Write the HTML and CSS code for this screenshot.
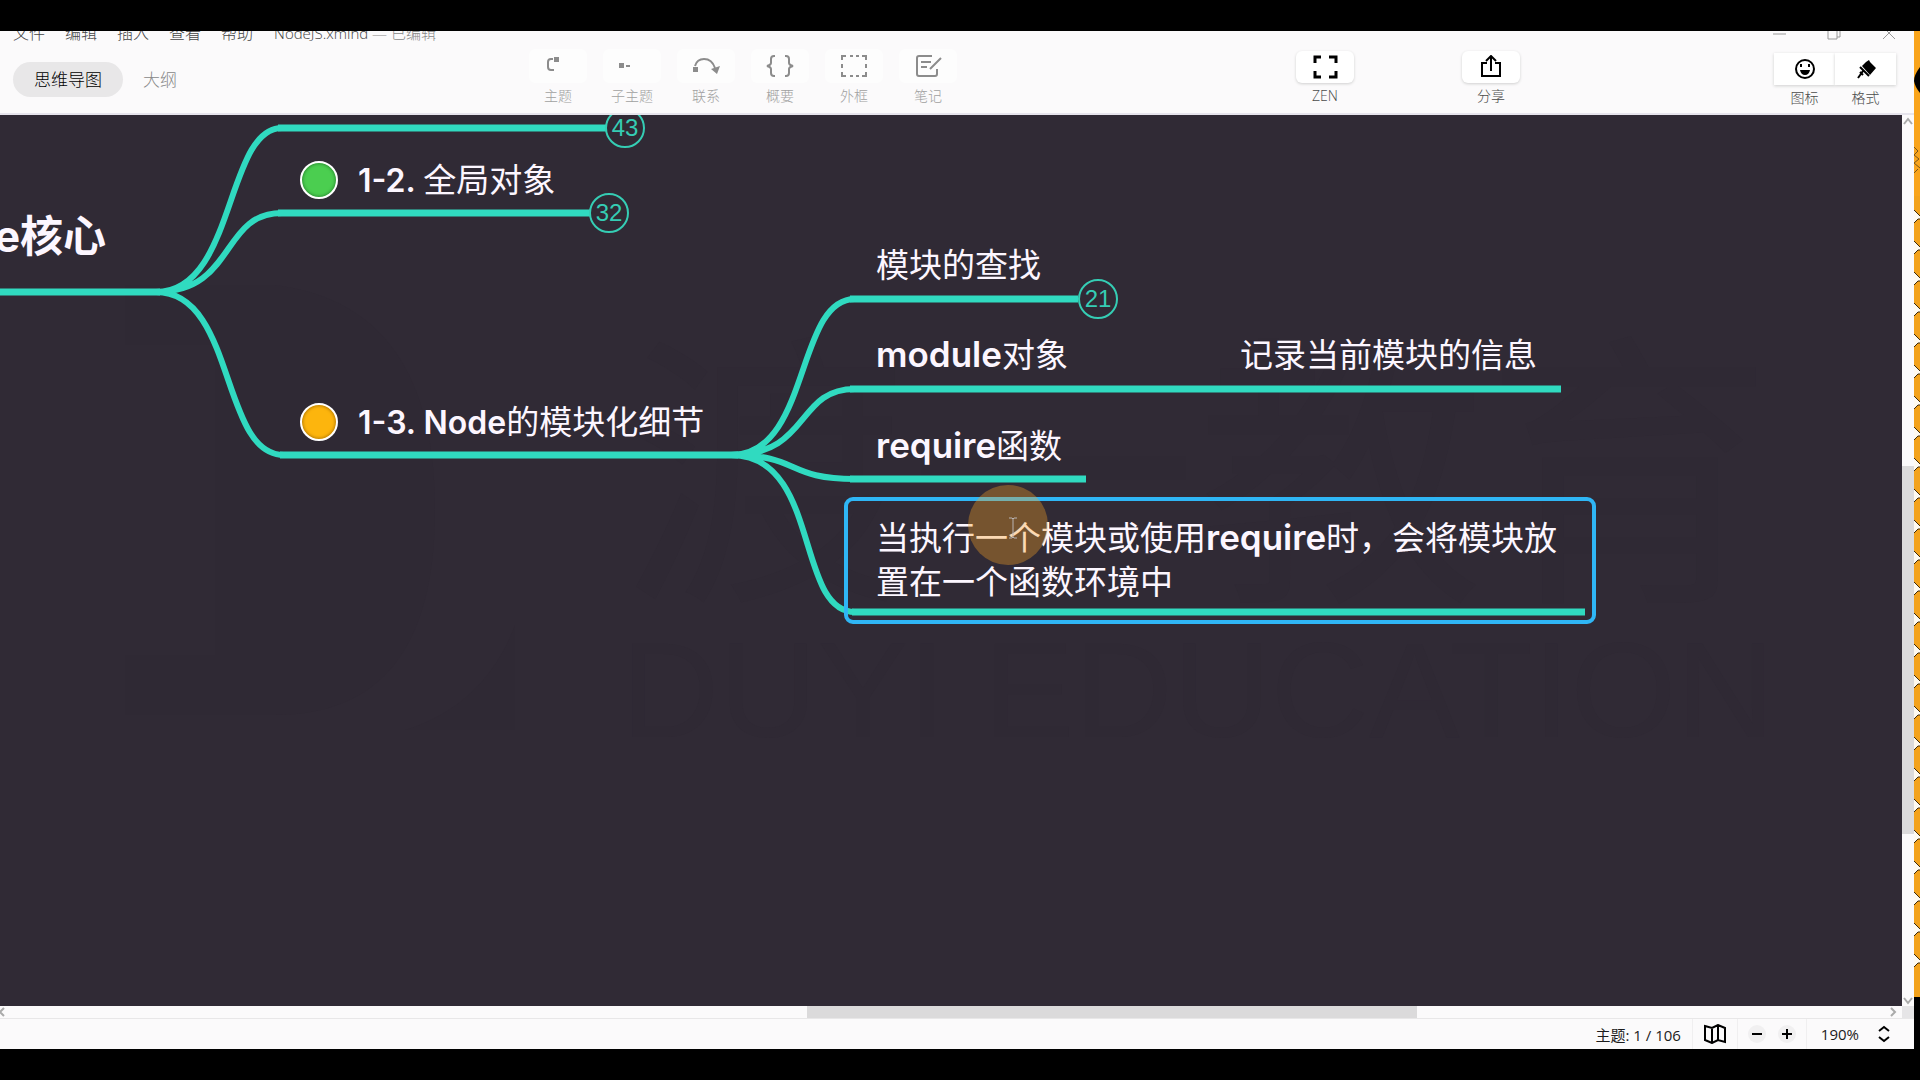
FILE: index.html
```html
<!DOCTYPE html>
<html lang="zh-CN">
<head>
<meta charset="utf-8">
<title>NodeJS.xmind</title>
<link rel="stylesheet" href="styles.css">
</head>
<body>
<div class="desktop">
  <div class="window">
    <header class="header">
      <div class="title-row">
        <nav class="menu">
          <button>文件</button><button>编辑</button><button>插入</button><button>查看</button><button>帮助</button>
        </nav>
        <p class="doc-title">NodeJS.xmind <span class="muted">— 已编辑</span></p>
        <div class="window-controls">
          <button aria-label="最小化"><svg width="14" height="14" viewBox="0 0 14 14"><path d="M1 8H14"/></svg></button>
          <button aria-label="还原"><svg width="14" height="14" viewBox="0 0 14 14"><path d="M1 3H10V13H1ZM4 3V0H13V11H10"/></svg></button>
          <button aria-label="关闭"><svg width="14" height="14" viewBox="0 0 14 14"><path d="M1 1L13 13M13 1L1 13"/></svg></button>
        </div>
      </div>
      <div class="tool-row">
        <div class="tabs">
          <button class="tab active">思维导图</button>
          <button class="tab">大纲</button>
        </div>
        <div class="tools disabled">
          <button class="tool"><span class="face"><svg width="28" height="24" viewBox="0 0 28 24"><path d="M9 5H7Q4 5 4 8V13Q4 16 7 16H10" fill="none" stroke="currentColor" stroke-width="2"/><path d="M10 3H15V8H10Z" fill="currentColor"/></svg></span>主题</button>
          <button class="tool"><span class="face"><svg width="28" height="24" viewBox="0 0 28 24"><path d="M1 9H6V14H1ZM8 11H12V13H8Z" fill="currentColor"/></svg></span>子主题</button>
          <button class="tool"><span class="face"><svg width="28" height="24" viewBox="0 0 28 24"><path d="M3 12Q5 5 12 5Q20 5 23 14" fill="none" stroke="currentColor" stroke-width="2"/><path d="M1 13H6V18H1ZM19 15L28 12L25 20Z" fill="currentColor"/></svg></span>联系</button>
          <button class="tool"><span class="face"><svg width="28" height="24" viewBox="0 0 28 24"><path d="M9 2H8Q5 2 5 5V9Q5 11 1 12Q5 13 5 15V19Q5 22 8 22H9M19 2H20Q23 2 23 5V9Q23 11 27 12Q23 13 23 15V19Q23 22 20 22H19" fill="none" stroke="currentColor" stroke-width="2"/></svg></span>概要</button>
          <button class="tool"><span class="face"><svg width="28" height="24" viewBox="0 0 28 24"><path d="M2 6V2H6M10 2H13M16 2H19M22 2H26V6M26 10V14M26 18V22H22M19 22H16M13 22H10M6 22H2V18M2 14V10" fill="none" stroke="currentColor" stroke-width="2"/></svg></span>外框</button>
          <button class="tool"><span class="face"><svg width="28" height="24" viewBox="0 0 28 24"><path d="M18 2H5Q3 2 3 4V20Q3 22 5 22H21Q23 22 23 20V15M7 8H17M7 13H13M16 15L27 4" fill="none" stroke="currentColor" stroke-width="2"/></svg></span>笔记</button>
        </div>
        <div class="tools wide">
          <button class="tool"><span class="face raised"><svg width="28" height="24" viewBox="0 0 28 24"><path d="M4 8V2H10M18 2H25V8M25 16V22H18M10 22H4V16" fill="none" stroke="currentColor" stroke-width="3"/></svg></span>ZEN</button>
          <button class="tool"><span class="face raised"><svg width="28" height="24" viewBox="0 0 28 24"><path d="M10 8H5V21H23V8H18M14 16V2M9 6L14 1L19 6" fill="none" stroke="currentColor" stroke-width="2"/></svg></span>分享</button>
        </div>
        <div class="tools joined">
          <button class="tool"><span class="face raised"><svg width="24" height="24" viewBox="0 0 24 24"><circle cx="12" cy="12" r="9" fill="none" stroke="currentColor" stroke-width="2"/><path d="M8 7V10M16 7V10" stroke="currentColor" stroke-width="2"/><path d="M7 13H17Q16 18 12 18Q8 18 7 13Z" fill="currentColor"/></svg></span>图标</button>
          <button class="tool"><span class="face raised"><svg width="24" height="24" viewBox="0 0 24 24"><path d="M12 5L15 3L16 5L22 11L16 18L8 9Z" fill="currentColor"/><path d="M6 10L15 19M9 14L4 21M6 15L9 18" stroke="currentColor" stroke-width="2" fill="none"/></svg></span>格式</button>
        </div>
      </div>
    </header>

    <div class="workspace">
      <main class="canvas">
        <div class="watermark" aria-hidden="true">
          <svg width="400" height="450" viewBox="0 0 400 450"><path d="M0 0H150Q310 20 310 225Q310 430 150 430H0V370H90V60H0ZM390 340V445H280Q360 420 390 340Z"/></svg>
          <div class="watermark-text"><span class="watermark-name">渡一教育</span><span class="watermark-latin">DUYI EDUCATION</span></div>
        </div>
        <svg class="branches" width="1700" height="600" viewBox="0 0 1700 600">
          <g class="trunk">
            <path d="M0 177H160M278 13H606M278 98H590M280 340H738M850 184H1078M850 274H1561M850 364H1086M852 497H1585"/>
          </g>
          <g class="curve">
            <path d="M156 177C236 177 225 13 282 13M156 177C236 177 220 98 282 98M156 177C236 177 220 340 284 340"/>
            <path d="M731 340C811 340 795 184 855 184M731 340C811 340 795 274 855 274M731 340C801 340 785 364 855 364M731 340C821 340 795 497 855 497"/>
          </g>
        </svg>

        <div class="topic central">Node核心</div>
        <button class="count count-a">43</button>
        <div class="topic t-global"><i class="marker green"></i><span><b>1-2. </b>全局对象</span></div>
        <button class="count count-b">32</button>
        <div class="topic t-module"><i class="marker orange"></i><span><b>1-3. Node</b>的模块化细节</span></div>
        <div class="topic t-lookup">模块的查找</div>
        <button class="count count-c">21</button>
        <div class="topic t-object"><b>module</b>对象</div>
        <div class="topic t-info">记录当前模块的信息</div>
        <div class="topic t-require"><b>require</b>函数</div>
        <div class="topic selected">当执行一个模块或使用<b>require</b>时，会将模块放<br>置在一个函数环境中</div>
        <div class="pointer"><svg width="10" height="22" viewBox="0 0 10 22"><path d="M1 1H4L5 2L6 1H9M5 2V20M1 21H4L5 20L6 21H9" fill="none" stroke="#b9b4b4" stroke-width="1"/></svg></div>
      </main>
      <div class="scroll-y">
        <svg width="12" height="12" viewBox="0 0 12 12"><path d="M2 9L6 4L10 9"/></svg>
        <div class="track"><div class="thumb"></div></div>
        <svg width="12" height="12" viewBox="0 0 12 12"><path d="M2 4L6 9L10 4"/></svg>
      </div>
    </div>
    <div class="scroll-x">
      <svg width="12" height="12" viewBox="0 0 12 12"><path d="M4 2L0 6L4 10"/></svg>
      <div class="track"><div class="thumb"></div></div>
      <svg width="12" height="12" viewBox="0 0 12 12"><path d="M3 2L7 6L3 10"/></svg>
      <span class="corner"></span>
    </div>

    <footer class="status">
      <span class="topic-count">主题: 1 / 106</span>
      <button class="map-button" aria-label="导航图"><svg width="22" height="20" viewBox="0 0 22 20"><path d="M1 2L8 4L14 1L21 4V18L14 16L8 19L1 16ZM8 4V18M14 1V16" fill="none" stroke="#000" stroke-width="2"/></svg></button>
      <div class="zoom">
        <button aria-label="缩小"><svg width="18" height="18" viewBox="0 0 18 18"><path d="M4 9H14"/></svg></button>
        <button aria-label="放大"><svg width="18" height="18" viewBox="0 0 18 18"><path d="M4 9H14M9 4V14"/></svg></button>
      </div>
      <button class="zoom-level">190%<svg width="12" height="18" viewBox="0 0 12 18"><path d="M1 6L6 2L11 6M1 12L6 16L11 12"/></svg></button>
    </footer>
  </div>
  <aside class="wallpaper" aria-hidden="true">
    <svg width="6" height="966">
      <defs><pattern id="scales" width="6" height="31" patternUnits="userSpaceOnUse">
        <rect width="6" height="31" fill="#fffaf0"/><path d="M0 6L4 2H6V30L0 24Z" fill="#f3a21c"/><path d="M0 6L4 2H6M0 24L6 30" fill="none" stroke="#3d2a0c" stroke-width="1"/>
      </pattern></defs>
      <rect width="6" height="966" fill="url(#scales)"/>
      <rect width="6" height="165" fill="#f9a41b"/>
      <path d="M6 36Q0 44 0 50Q1 56 6 62Z" fill="#000"/>
      <path d="M0 116L4 120L0 124L5 128L0 132L6 137M0 142L4 138" fill="none" stroke="#7a5417"/>
      <rect y="938" width="6" height="28" fill="#f3a21c"/>
    </svg>
  </aside>
</div>
</body>
</html>
```
FILE: styles.css
```css
* { box-sizing: border-box; }

body {
  margin: 0;
  background: #000;
  color: #1c1c1c;
  font-family: "Open Sans", "Noto Sans CJK SC", sans-serif;
}

button {
  margin: 0;
  padding: 0;
  border: 0;
  background: none;
  color: inherit;
  font: inherit;
}

svg { display: block; flex: none; }

.desktop {
  display: flex;
  height: 100vh;
  padding: 31px 0;
}

.window {
  display: flex;
  flex: 1;
  flex-direction: column;
  min-width: 0;
  background: #fbfafb;
}

/* Header */
.header {
  height: 84px;
  border-bottom: 2px solid #e6e4ec;
  overflow: hidden;
  flex: none;
}

.title-row {
  display: flex;
  align-items: center;
  height: 24px;
  margin-top: -10px;
  padding: 0 18px 0 13px;
}

.menu {
  display: flex;
  gap: 20px;
  color: #444;
  font-size: 16px;
  font-weight: 300;
  line-height: 24px;
}

.doc-title {
  flex: 1;
  margin: 0 0 0 21px;
  color: #444;
  font-size: 15px;
  font-weight: 300;
  line-height: 24px;
}

.muted { color: #888; }

.window-controls {
  display: flex;
  gap: 41px;
}

.window-controls path {
  fill: none;
  stroke: #999;
}

.tool-row {
  display: flex;
  align-items: flex-start;
  padding: 2px 18px 0 13px;
}

.tabs {
  display: flex;
  flex: 1;
  margin-top: 15px;
}

.tab {
  height: 35px;
  padding: 0 20px;
  border-radius: 18px;
  color: #888;
  font-size: 17px;
  font-weight: 300;
  line-height: 36px;
}

.tab.active {
  padding: 0 21px;
  background: #e8e7e8;
  color: #000;
}

.tools {
  display: flex;
  gap: 16px;
  color: #4a4a4a;
}

.tools.disabled {
  margin-right: 339px;
  color: #a0a0a0;
}

.tools.wide {
  gap: 108px;
  margin: 2px 254px 0 0;
}

.tools.joined {
  gap: 0;
  margin-top: 4px;
}

.tool {
  display: flex;
  flex-direction: column;
  align-items: center;
  width: 58px;
  font-size: 14px;
  font-weight: 300;
  line-height: 20px;
  white-space: nowrap;
}

.face {
  display: flex;
  align-items: center;
  justify-content: center;
  width: 100%;
  height: 34px;
  margin: 2px 0 3px;
  border-radius: 6px;
  background: #fdfdfd;
}

.face.raised {
  height: 32px;
  background: #fff;
  box-shadow: 0 1px 3px #cfcfcf;
  color: #000;
}

.joined .tool { width: 61px; }
.joined .face { border-radius: 0; }
.disabled .face { color: #8c8c8c; }

/* Mind map */
.workspace {
  display: flex;
  flex: 1;
  min-height: 0;
}

.canvas {
  position: relative;
  flex: 1;
  overflow: hidden;
  background: #302a35;
}

.branches {
  position: absolute;
  left: 0;
  top: 0;
  fill: none;
  stroke: #30dac0;
}

.trunk { stroke-width: 7; }
.curve { stroke-width: 6; }

.topic {
  position: absolute;
  color: #fcf6ff;
  font-family: Inter, "Noto Sans CJK SC", sans-serif;
  font-size: 33px;
  line-height: 44px;
  white-space: nowrap;
}

.topic b {
  font-size: 35px;
  font-weight: 600;
  line-height: 1;
  white-space: pre;
}

.t-global,
.t-module {
  display: flex;
  align-items: center;
  gap: 20px;
  left: 300px;
}

.t-global b,
.t-module b { font-size: 32px; }

.central {
  left: -100px;
  top: 91px;
  width: 206px;
  font-size: 43px;
  font-weight: 700;
  line-height: 60px;
  direction: rtl;
}

.t-global { top: 43px; }
.t-module { top: 285px; }
.t-lookup { left: 876px; top: 128px; }
.t-object { left: 876px; top: 218px; }
.t-info { left: 1240px; top: 218px; }
.t-require { left: 876px; top: 309px; }

.selected {
  left: 844px;
  top: 382px;
  width: 752px;
  height: 127px;
  padding: 15px 28px;
  border: 4px solid #2fb6f5;
  border-radius: 9px;
}

.marker {
  width: 38px;
  height: 38px;
  border: 2px solid #fff;
  border-radius: 50%;
}

.green { background: #4bce50; box-shadow: inset 0 0 3px 1px #2f9136; }
.orange { background: #fdb50d; box-shadow: inset 0 0 3px 1px #b97d05; }

.count {
  position: absolute;
  width: 40px;
  height: 40px;
  border: 2px solid #35cdb4;
  border-radius: 50%;
  background: #302a35;
  color: #35cdb4;
  font-family: "Liberation Sans", sans-serif;
  font-size: 24px;
  line-height: 36px;
  text-align: center;
}

.count-a { left: 605px; top: -7px; }
.count-b { left: 589px; top: 78px; }
.count-c { left: 1078px; top: 164px; }

.pointer {
  position: absolute;
  left: 968px;
  top: 370px;
  width: 80px;
  height: 80px;
  padding: 32px 0 0 40px;
  border-radius: 50%;
  background: #f8a42459;
}

.watermark {
  position: absolute;
  left: 125px;
  top: 170px;
  display: flex;
  gap: 96px;
  color: #2f2934;
  fill: #2f2934;
}

.watermark-text {
  display: flex;
  flex-direction: column;
  white-space: nowrap;
}

.watermark-name {
  font-family: "Noto Sans CJK SC", sans-serif;
  font-size: 288px;
  line-height: 340px;
}

.watermark-latin {
  font-family: "Liberation Sans", sans-serif;
  font-size: 136px;
  line-height: 130px;
}

/* Scroll bars */
.scroll-y,
.scroll-x {
  display: flex;
  flex: none;
  fill: none;
  stroke: #aaa;
  stroke-width: 2;
}

.scroll-y {
  flex-direction: column;
  width: 12px;
}

.scroll-x { height: 12px; }

.track {
  display: flex;
  flex: 1;
}

.scroll-y .track {
  flex-direction: column;
  padding: 339px 0 160px;
}

.scroll-x .track { padding: 0 471px 0 795px; }

.thumb {
  flex: 1;
  background: #dbdadb;
}

.corner {
  width: 12px;
  margin-left: 2px;
  background: #e6e5e7;
}

/* Status bar */
.status {
  display: flex;
  align-items: center;
  justify-content: flex-end;
  flex: none;
  height: 31px;
  padding-right: 24px;
  border-top: 1px solid #e8e7e8;
  font-size: 15px;
}

.status > * {
  display: flex;
  align-items: center;
  height: 30px;
}

.topic-count { padding-right: 11px; }

.map-button {
  padding: 0 11px;
  border: solid #f0eff0;
  border-width: 0 1px;
}

.zoom {
  gap: 12px;
  padding: 0 10px;
  border-right: 1px solid #f0eff0;
}

.zoom button {
  border-radius: 50%;
  background: #f1f0f1;
}

.zoom path,
.zoom-level path {
  fill: none;
  stroke: #000;
  stroke-width: 2;
}

.zoom-level {
  gap: 19px;
  padding-left: 14px;
}

.wallpaper {
  flex: none;
  width: 6px;
}
```
